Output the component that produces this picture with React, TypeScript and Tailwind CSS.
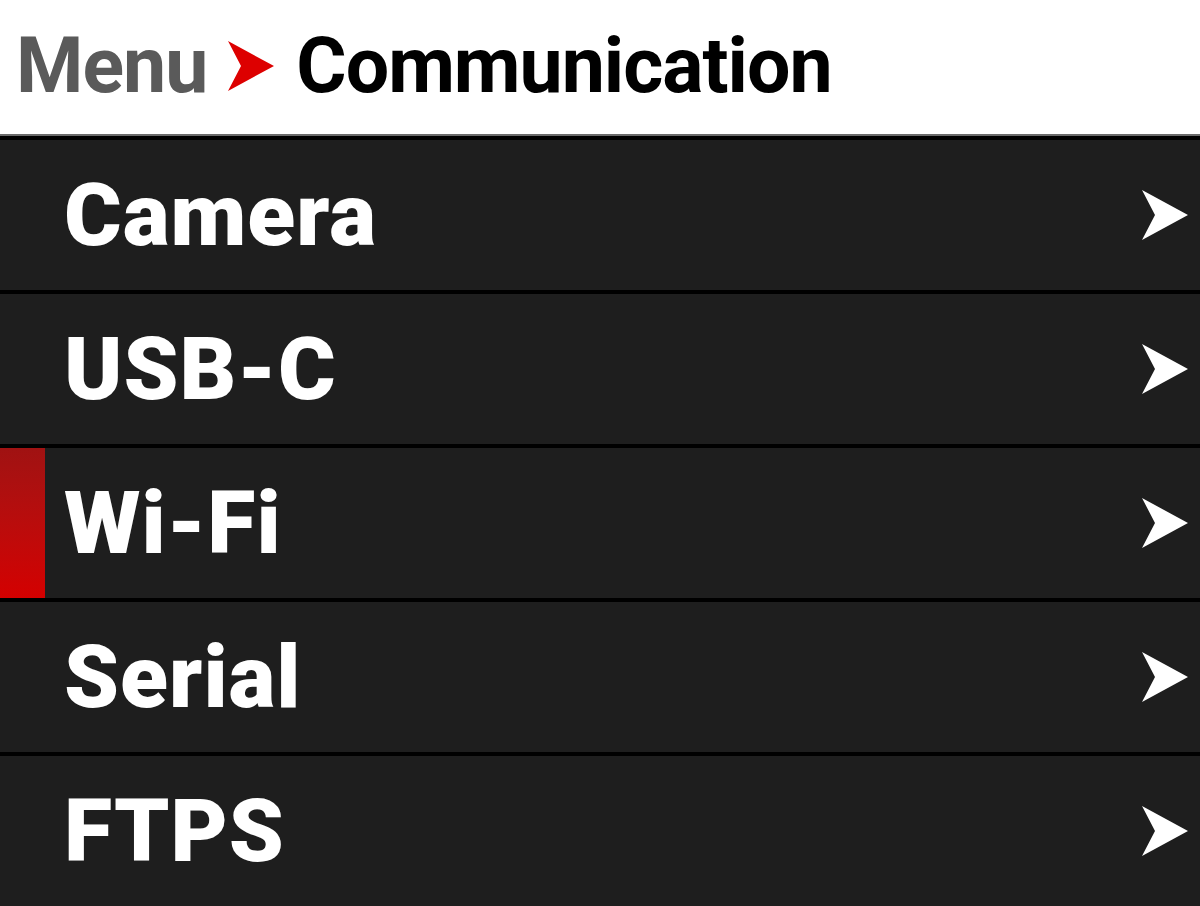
import React from "react";

const items = ["Camera", "USB-C", "Wi-Fi", "Serial", "FTPS"];

const Arrow = ({ className }: { className: string }) => (
  <svg viewBox="0 0 46 50" className={className}>
    <path d="M0 0 L46 25 L0 50 L13 25 Z" fill="currentColor" />
  </svg>
);

const App: React.FC = () => {
  return (
    <div className="w-[1200px] h-[906px] overflow-hidden bg-[#1e1e1e] font-['Roboto',sans-serif] font-bold">
      {/* Breadcrumb */}
      <div className="h-[134px] bg-white flex items-center pl-[16px] pb-[2px]">
        <span className="text-[#5a5a5a] text-[77px] leading-none tracking-[-1px]">Menu</span>
        <Arrow className="w-[46px] h-[50px] text-[#dd0000] ml-[21px] mr-[22px]" />
        <span className="text-black text-[77px] leading-none tracking-[-1px]">Communication</span>
      </div>
      <div className="h-[6px] bg-black border-t-2 border-[#6a6a6a]" />

      {/* List */}
      <div className="flex flex-col gap-[4px] bg-black">
        {items.map((label) => (
          <div key={label} className="relative h-[150px] bg-[#1e1e1e] flex items-center pl-[64px] pr-[12px]">
            {label === "Wi-Fi" && (
              <div className="absolute left-0 top-0 bottom-0 w-[45px] bg-gradient-to-b from-[#a01212] to-[#d40000]" />
            )}
            <span className="flex-1 text-white text-[88px] font-black leading-none tracking-[1px]">{label}</span>
            <Arrow className="w-[46px] h-[50px] text-white" />
          </div>
        ))}
      </div>
    </div>
  );
};

export default App;
